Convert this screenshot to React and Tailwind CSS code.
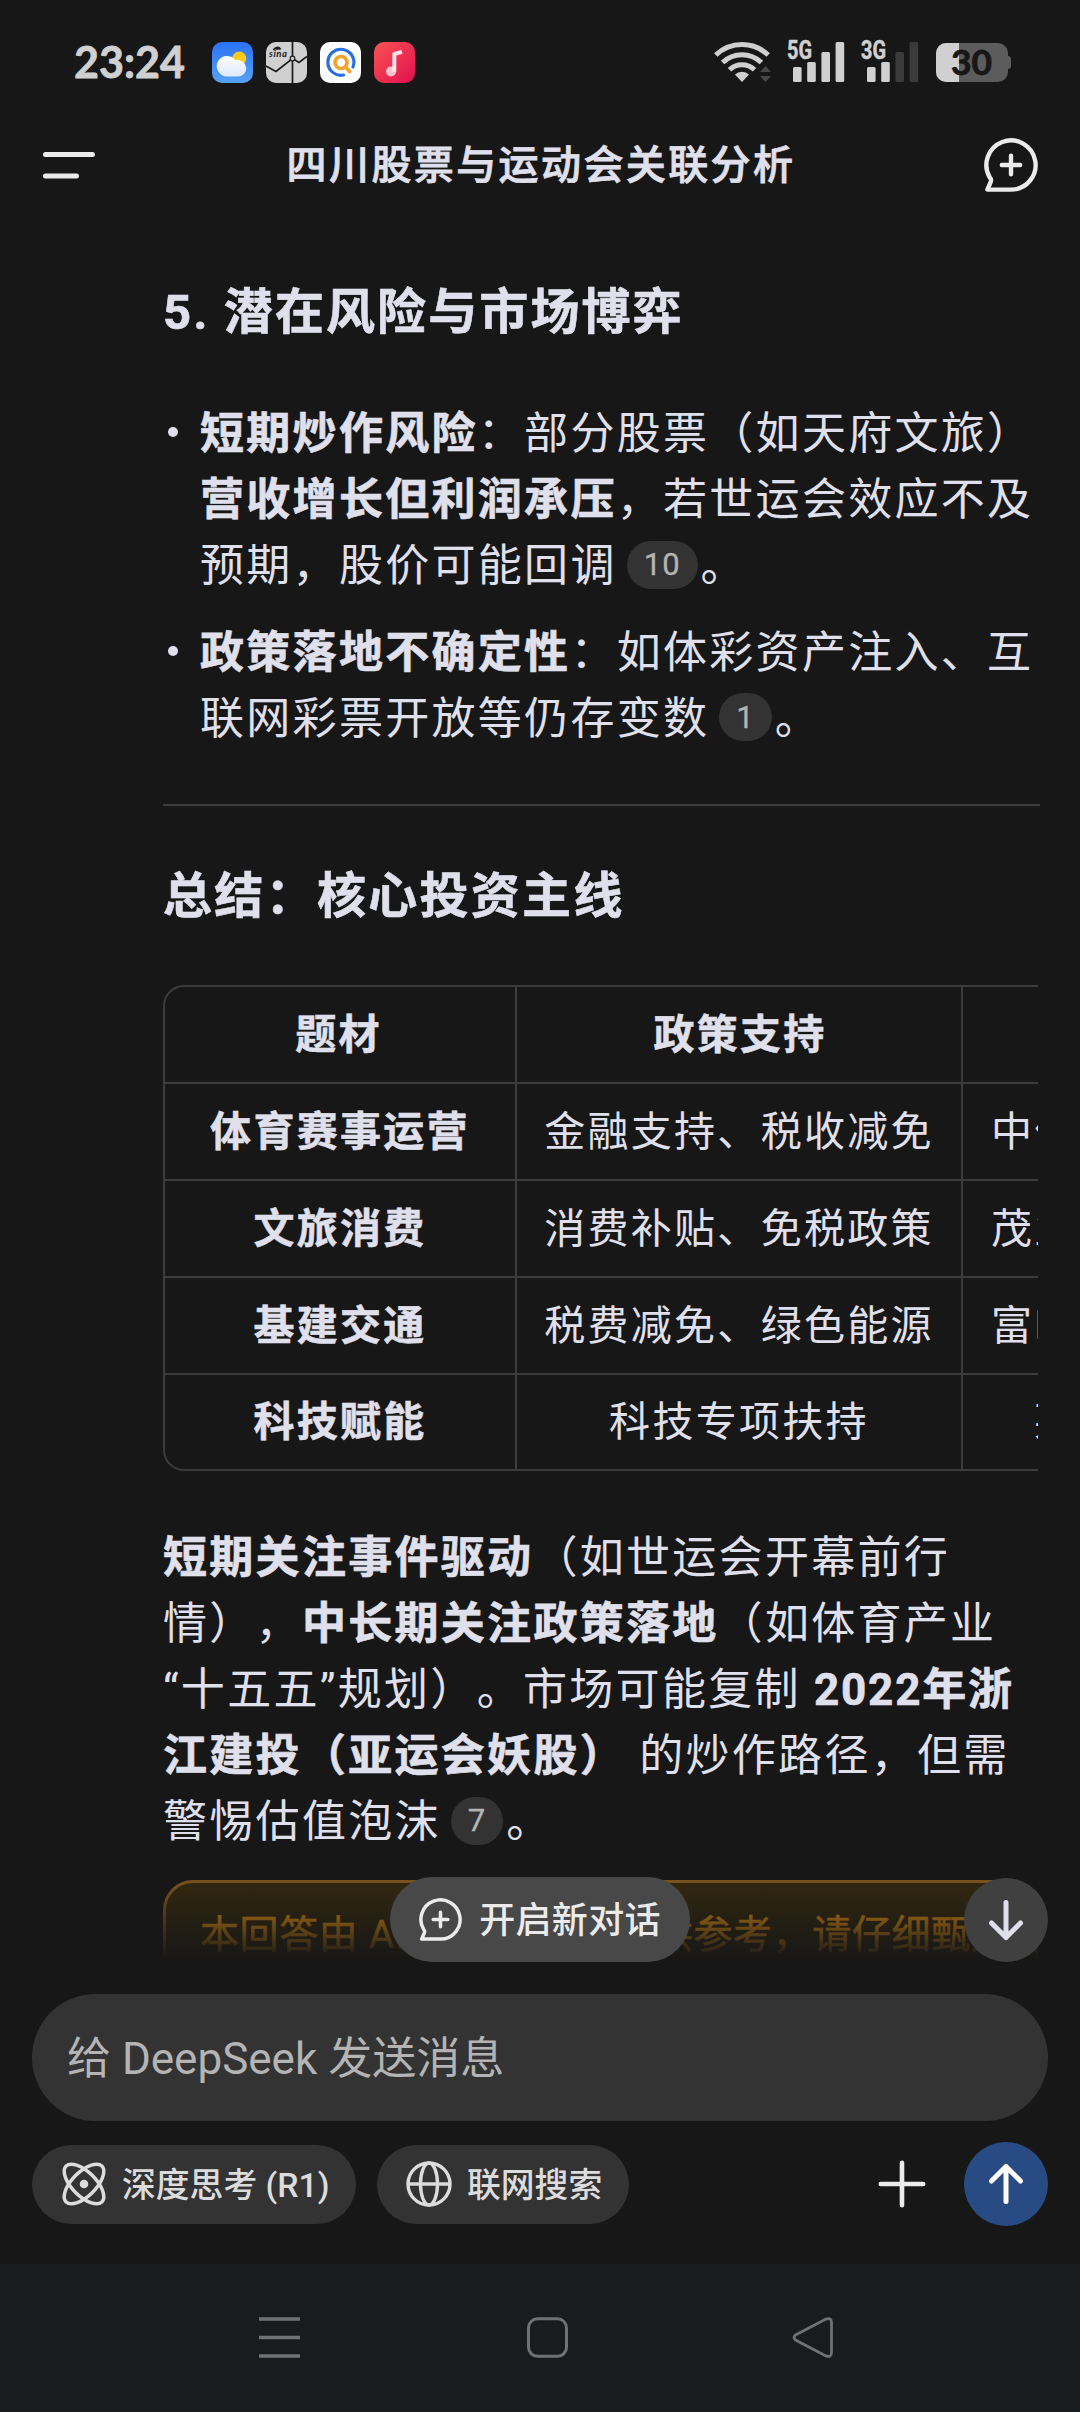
import React from 'react';

const APP_ICON = 'w-[41px] h-[41px] shrink-0';

const ChatPlus = ({ className }) => (
  <svg viewBox="0 0 54 54" className={className} fill="none" stroke="currentColor" strokeWidth="4.4" strokeLinecap="round" strokeLinejoin="round">
    <path d="M27 51.6 A24.6 24.6 0 1 0 6 39.8 Q7.6 41.4 6.8 43.6 L3.4 51.6 Z" />
    <path d="M27 17.8 V36.2 M17.8 27 H36.2" />
  </svg>
);

const Arrow = ({ up }) => (
  <svg viewBox="0 0 36 42" className="w-9 h-[42px]" fill="none" stroke="currentColor" strokeWidth="5" strokeLinecap="round" strokeLinejoin="round">
    {up ? <path d="M18 38.5 V3.5 M3.5 18 L18 3.5 L32.5 18" /> : <path d="M18 3.5 V38.5 M3.5 24 L18 38.5 L32.5 24" />}
  </svg>
);

const Signal = ({ label, active }) => (
  <svg viewBox="0 0 60 42" className="w-[60px] h-[42px] mr-[14px] shrink-0 overflow-visible">
    <text x="0" y="17.5" fontSize="25" fontWeight="700" textLength="25" lengthAdjust="spacingAndGlyphs" fill="#d0d0d0" stroke="#d0d0d0" strokeWidth="0.5" fontFamily="Roboto, sans-serif">{label}</text>
    {[26, 21, 11, 1].map((y, i) => (
      <rect key={y} x={6 + i * 14.2} y={y} width="8.6" height={41 - y} rx="1.5" fill={i < active ? '#d0d0d0' : '#3b3b3b'} />
    ))}
  </svg>
);

const StatusBar = () => (
  <div className="h-[124px] flex items-center pl-[74px] pr-[69px] text-[#d0d0d0]">
    <div className="w-[138px] pb-[2px] text-[43px] leading-none font-bold font-['Lato',sans-serif] [-webkit-text-stroke:0.8px]">23:24</div>
    <div className="flex gap-[13px]">
      <svg viewBox="0 0 41 41" className={APP_ICON}>
        <defs>
          <linearGradient id="sky" x1="0" y1="0" x2="0" y2="1"><stop offset="0" stopColor="#2b72fb" /><stop offset="1" stopColor="#57a2f6" /></linearGradient>
          <linearGradient id="cloud" x1="0" y1="0" x2="0" y2="1"><stop offset="0" stopColor="#fff" /><stop offset="1" stopColor="#dce8fb" /></linearGradient>
        </defs>
        <rect width="41" height="41" rx="10" fill="url(#sky)" />
        <circle cx="27.3" cy="16.5" r="7" fill="#fbcb1d" />
        <path d="M15 34.5 a10.3 10.3 0 1 1 8.2 -16.6 a10 8.8 0 0 1 11.2 7.8 a8.6 8.6 0 0 1 -8.6 8.8 Z" fill="url(#cloud)" />
      </svg>
      <svg viewBox="0 0 41 41" className={APP_ICON}>
        <rect width="41" height="41" rx="10" fill="#d0d0d0" />
        <path d="M0 24 L10 29.5 L26.5 16.5 L33 20.5 L41 14.5 M26.5 0 V41" fill="none" stroke="#1c1c1c" strokeWidth="1.7" />
        <circle cx="26.5" cy="16.5" r="2.3" fill="#d0d0d0" stroke="#1c1c1c" strokeWidth="1.2" />
        <path d="M7.5 8 a3.8 3.6 0 0 1 7 -0.5 M9.5 7.5 a1.8 1.8 0 0 1 3 0" fill="none" stroke="#1c1c1c" strokeWidth="1.8" />
        <text x="3" y="15.3" fontSize="9.5" fontWeight="700" fontStyle="italic" textLength="18" fill="#1c1c1c" fontFamily="Lato, sans-serif">sina</text>
      </svg>
      <svg viewBox="0 0 41 41" className={APP_ICON}>
        <rect width="41" height="41" rx="10" fill="#fff" />
        <path d="M33 25 A13 13 0 1 0 23.5 33" fill="none" stroke="#2a6fe0" strokeWidth="3.2" strokeLinecap="round" />
        <circle cx="21" cy="20.5" r="6" fill="none" stroke="#f3a32b" strokeWidth="3.6" />
        <path d="M25.5 25 L29.5 29.5" stroke="#f3a32b" strokeWidth="3.8" strokeLinecap="round" />
      </svg>
      <svg viewBox="0 0 41 41" className={APP_ICON}>
        <defs>
          <linearGradient id="music" x1="0" y1="0" x2="1" y2="1"><stop offset="0" stopColor="#fb5353" /><stop offset="1" stopColor="#e0104f" /></linearGradient>
        </defs>
        <rect width="41" height="41" rx="10" fill="url(#music)" />
        <circle cx="17" cy="29.5" r="5" fill="#fcc3cb" />
        <path d="M20.3 30 V12 L28 9.8" fill="none" stroke="#ffe3e6" strokeWidth="4" strokeLinejoin="round" />
      </svg>
    </div>
    <div className="flex items-center ml-auto">
      <svg viewBox="0 0 58 42" className="w-[58px] h-[42px] mr-[15px] shrink-0">
        <g fill="none" stroke="#d0d0d0" strokeWidth="5">
          <path d="M1.8 14 A38 38 0 0 1 54.2 14" />
          <path d="M8.6 21.5 A28 28 0 0 1 47.4 21.5" />
          <path d="M15.5 28.8 A18 18 0 0 1 40.5 28.8" />
        </g>
        <path d="M21 33.5 A10 10 0 0 1 35 33.5 L28 41 Z" fill="#d0d0d0" />
        <path d="M51.5 25 L57 31 H46 Z M46 35 H57 L51.5 41 Z" fill="#484848" />
      </svg>
      <Signal label="5G" active={4} />
      <Signal label="3G" active={2} />
      <svg viewBox="0 0 75 39" className="w-[75px] h-[39px] ml-px shrink-0">
        <defs><clipPath id="battery"><rect width="72" height="39" rx="10" /></clipPath></defs>
        <g clipPath="url(#battery)"><rect width="72" height="39" fill="#5c5c5c" /><rect width="23" height="39" fill="#d0d0d0" /></g>
        <path d="M72 13 q3 0 3 3 v7 q0 3 -3 3 Z" fill="#5c5c5c" />
        <text x="15" y="32" fontSize="35" fontWeight="700" textLength="41" lengthAdjust="spacingAndGlyphs" fill="#171717" stroke="#171717" strokeWidth="0.8" fontFamily="Lato, sans-serif">30</text>
      </svg>
    </div>
  </div>
);

const Header = () => (
  <header className="h-[82px] flex items-center justify-between pl-[43px] pr-[42px]">
    <svg viewBox="0 0 54 54" className="w-[54px] h-[54px]" stroke="#ebebeb" strokeWidth="5" strokeLinecap="round">
      <path d="M2.5 16.5 H49.5 M2.5 38 H33.5" />
    </svg>
    <h1 className="pt-[2px] pl-px text-[40px] leading-none font-medium tracking-[2.4px] [-webkit-text-stroke:0.8px]">四川股票与运动会关联分析</h1>
    <ChatPlus className="w-[54px] h-[54px] text-[#ebebeb]" />
  </header>
);

const Strong = ({ children }) => <b className="[-webkit-text-stroke:0.6px]">{children}</b>;

const Cite = ({ children }) => (
  <span className="inline-flex items-center justify-center h-12 min-w-[51px] px-[17px] ml-[10px] mr-[3px] rounded-full bg-[#333333] text-[#b4b4b4] text-[31px] leading-none tracking-[1px] relative -top-[12px] align-[-6px] [-webkit-text-stroke:0.3px]">{children}</span>
);

const Bullet = ({ children }) => (
  <li className="flex">
    <span className="w-[10px] h-[10px] rounded-full bg-[#e0e0ec] ml-[5px] mr-[22px] mt-[26px] shrink-0" />
    <p className="whitespace-nowrap">{children}</p>
  </li>
);

const rows = [
  ['体育赛事运营', '金融支持、税收减免', '中体产业、莱茵体育'],
  ['文旅消费', '消费补贴、免税政策', '茂业商业、天府文旅'],
  ['基建交通', '税费减免、绿色能源', '富临运业、四川路桥'],
  ['科技赋能', '科技专项扶持', '莱斯信息、创维'],
];

const SummaryTable = () => (
  <div className="w-[875px] overflow-hidden">
    <div className="w-[1250px] rounded-[21px] border-2 border-[#3c3c3c] text-[41px] tracking-[2.3px] leading-none text-center whitespace-nowrap">
      <div className="grid grid-cols-[352px_446px_1fr] h-[97px] font-bold border-b-2 border-[#3c3c3c] [-webkit-text-stroke:0.5px]">
        <div className="flex items-center justify-center border-r-2 border-[#3c3c3c] pr-[3px] pt-px">题材</div>
        <div className="flex items-center justify-center border-r-2 border-[#3c3c3c] pl-[2px] pt-px">政策支持</div>
        <div className="flex items-center justify-center">受益标的</div>
      </div>
      {rows.map(([topic, policy, stocks], i) => (
        <div key={topic} className={i < 3 ? 'grid grid-cols-[352px_446px_1fr] h-[97px] border-b-2 border-[#3c3c3c]' : 'grid grid-cols-[352px_446px_1fr] h-[94px]'}>
          <div className="flex items-center justify-center border-r-2 border-[#3c3c3c] pt-px font-bold [-webkit-text-stroke:0.5px]">{topic}</div>
          <div className="flex items-center justify-center border-r-2 border-[#3c3c3c] pt-px">{policy}</div>
          <div className={i < 3 ? 'flex items-center pl-[28px] pt-px' : 'flex items-center pl-[71px] pt-px'}>{stocks}</div>
        </div>
      ))}
    </div>
  </div>
);

const Answer = () => (
  <main className="h-[1754px] overflow-hidden pl-[163px] relative text-[44px] leading-[66px] tracking-[2.3px] [text-spacing-trim:space-all]">
    <h2 className="mt-[74px] h-[66px] text-[49px] font-bold tracking-[2.1px] whitespace-nowrap [-webkit-text-stroke:0.6px]">5. 潜在风险与市场博弈</h2>
    <ul className="mt-[55px] space-y-[19px]">
      <Bullet>
        <Strong>短期炒作风险</Strong>：部分股票（如天府文旅）<br />
        <Strong>营收增长但利润承压</Strong>，若世运会效应不及<br />
        预期，股价可能回调<Cite>10</Cite>。
      </Bullet>
      <Bullet>
        <Strong>政策落地不确定性</Strong>：如体彩资产注入、互<br />
        联网彩票开放等仍存变数<Cite>1</Cite>。
      </Bullet>
    </ul>
    <hr className="w-[877px] border-0 h-[2px] bg-[#3c3c3c] mt-[51px]" />
    <h2 className="mt-[58px] mb-[55px] h-[66px] text-[49px] font-bold whitespace-nowrap [-webkit-text-stroke:0.6px]">总结：核心投资主线</h2>
    <SummaryTable />
    <p className="mt-[54px] whitespace-nowrap">
      <Strong>短期关注事件驱动</Strong>（如世运会开幕前行<br />
      情），<Strong>中长期关注政策落地</Strong>（如体育产业<br />
      “十五五”规划）。市场可能复制 <b className="[-webkit-text-stroke:0.6px] tracking-[1.8px]">2022年浙</b><br />
      <Strong>江建投（亚运会妖股）</Strong> 的炒作路径，但需<br />
      警惕估值泡沫<Cite>7</Cite>。
    </p>
    <div className="mt-[23px] w-[875px] h-[130px] rounded-[30px] border-[3px] border-[#83591f] bg-[#35290f] text-[#f29a10] text-[39px] leading-[60px] tracking-[0.6px] pl-[34px] pt-[22px] whitespace-nowrap [-webkit-text-stroke:0.5px]">本回答由 AI 生成，内容仅供参考，请仔细甄别</div>
    <div className="absolute left-0 right-0 bottom-0 h-[88px] bg-linear-to-b from-[#171717]/0 to-[#171717]" />
  </main>
);

const FloatingActions = () => (
  <div className="absolute left-[390px] right-8 top-[1877px] flex items-center justify-between">
    <button className="h-[85px] w-[300px] rounded-full bg-[#484848] text-[#ebebeb] flex items-center justify-center gap-[17px] text-[36px] leading-none font-medium tracking-[0.3px]">
      <ChatPlus className="w-[43px] h-[43px]" /><span className="pt-[2px]">开启新对话</span>
    </button>
    <button className="w-[84px] h-[84px] rounded-full bg-[#404040] text-[#e0e0ec] flex items-center justify-center"><Arrow /></button>
  </div>
);

const Composer = () => (
  <footer className="pt-[34px] px-8 h-[304px]">
    <div className="h-[127px] rounded-[64px] bg-[#333333] flex items-center pl-[35px] pt-[2px] text-[44px] leading-none text-[#b4b4b4] whitespace-pre">给 DeepSeek 发送消息</div>
    <div className="mt-[21px] flex items-center h-[84px]">
      <button className="h-[79px] w-[324px] rounded-full bg-[#333333] text-[#dcdcdc] flex items-center pl-[30px] gap-[16px] text-[33.8px] leading-none font-medium">
        <svg viewBox="0 0 44 44" className="w-[44px] h-[44px] shrink-0 overflow-visible" fill="none" stroke="currentColor" strokeWidth="3.5">
          <ellipse cx="22" cy="22" rx="25.3" ry="11.9" transform="rotate(45 22 22)" />
          <ellipse cx="22" cy="22" rx="25.3" ry="11.9" transform="rotate(-45 22 22)" />
          <circle cx="22" cy="22" r="4.3" fill="currentColor" stroke="none" />
        </svg>
        <span className="pt-[3px] whitespace-nowrap">深度思考 (R1)</span>
      </button>
      <button className="h-[79px] w-[252px] ml-[21px] rounded-full bg-[#333333] text-[#dcdcdc] flex items-center pl-[29px] gap-[15px] text-[33.8px] leading-none font-medium">
        <svg viewBox="0 0 46 46" className="w-[46px] h-[46px] shrink-0" fill="none" stroke="currentColor" strokeWidth="3.4">
          <circle cx="23" cy="23" r="21" />
          <ellipse cx="23" cy="23" rx="8.5" ry="21" />
          <path d="M2 23 H44" />
        </svg>
        <span className="pt-[3px] whitespace-nowrap">联网搜索</span>
      </button>
      <svg viewBox="0 0 48 48" className="w-12 h-12 ml-auto mr-[38px]" stroke="#ebebeb" strokeWidth="4.6" strokeLinecap="round">
        <path d="M24 2.8 V45.2 M2.8 24 H45.2" />
      </svg>
      <button className="w-[84px] h-[84px] rounded-full bg-[#294b84] text-white flex items-center justify-center"><Arrow up /></button>
    </div>
  </footer>
);

const NavBar = () => (
  <nav className="h-[148px] bg-[#1a1b1f] flex items-center">
    <svg viewBox="0 0 1080 42" className="w-[1080px] h-[42px]" fill="none" stroke="#707174">
      <path d="M259 2 H300 M259 20.5 H300 M259 39 H300" strokeWidth="3.4" />
      <rect x="528.5" y="1.8" width="38" height="37.5" rx="9" strokeWidth="3" />
      <path d="M795.5 18 L826 2.1 Q831.5 0.1 831.5 5.5 V35.5 Q831.5 40.9 826 38.9 L795.5 23 Q792.5 20.5 795.5 18 Z" strokeWidth="2.8" />
    </svg>
  </nav>
);

const App = () => (
  <div className="w-[1080px] h-[2412px] relative overflow-hidden bg-[#171717] text-[#e0e0ec] font-['Roboto','Noto_Sans_CJK_SC',sans-serif]" lang="zh-CN">
    <StatusBar />
    <Header />
    <Answer />
    <FloatingActions />
    <Composer />
    <NavBar />
  </div>
);

export default App;
